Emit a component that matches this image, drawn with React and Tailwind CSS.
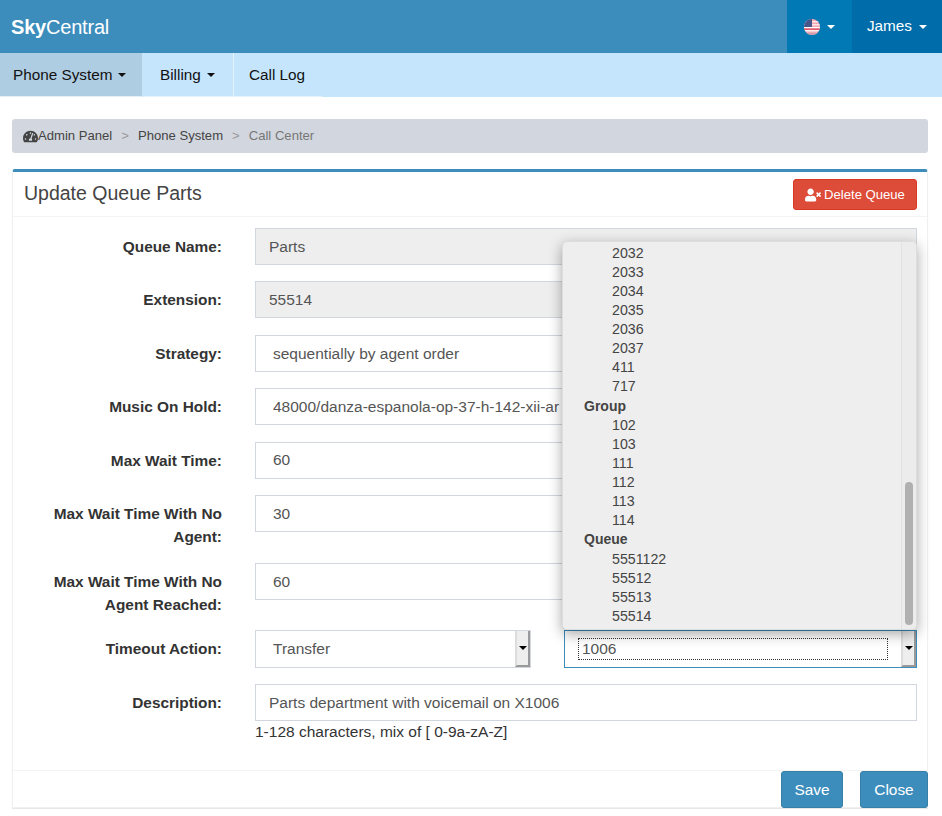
import { FaTachometerAlt, FaUserTimes } from 'react-icons/fa';

const peers = ['2032', '2033', '2034', '2035', '2036', '2037', '411', '717'];
const groups = ['102', '103', '111', '112', '113', '114'];
const queues = ['5551122', '55512', '55513', '55514'];

function Caret({ className = '' }) {
    return <span className={`inline-block w-0 h-0 border-x-[4px] border-x-transparent border-t-[4px] ${className}`}></span>;
}

function Field({ children, muted }) {
    return (
        <div className={`h-[37px] flex-1 min-w-0 border border-[#d2d6de] px-[13px] flex items-center whitespace-nowrap overflow-hidden text-[15.5px] text-[#555] ${muted ? 'bg-[#eee]' : 'bg-white'}`}>
            {children}
        </div>
    );
}

function SelectField({ children }) {
    return (
        <div className="h-[37px] flex-1 min-w-0 border border-[#d2d6de] pl-[17px] flex items-center whitespace-nowrap overflow-hidden text-[15.5px] text-[#555] bg-white">
            {children}
        </div>
    );
}

function Row({ label, children, className = 'h-[37.4px] mb-4' }) {
    return (
        <div className={`flex ${className}`}>
            <label className="w-[209px] shrink-0 pl-[29px] pt-[7px] text-right text-[15.4px] leading-[23px] font-bold text-[#333]">{label}</label>
            <div className="ml-[33px] flex-1 min-w-0">{children}</div>
        </div>
    );
}

function SelectArrow() {
    return (
        <div className="w-[15px] shrink-0 self-stretch flex items-center justify-center bg-[#eee] border-l-2 border-l-[#ddd] border-r-2 border-r-[#999] border-b-2 border-b-[#999]">
            <Caret className="border-t-black" />
        </div>
    );
}

function DropdownGroup({ title, items }) {
    return (
        <>
            {title && <div className="h-[19.13px] pl-[21px] leading-[19px] font-bold text-[#444]">{title}</div>}
            {items.map((item) => (
                <div key={item} className="h-[19.13px] pl-[49px] leading-[19px] text-[14.2px] text-[#444]">{item}</div>
            ))}
        </>
    );
}

function UsFlag() {
    return (
        <svg width="16" height="16" viewBox="0 0 16 16">
            <defs>
                <clipPath id="flagclip"><circle cx="8" cy="8" r="8" /></clipPath>
            </defs>
            <g clipPath="url(#flagclip)">
                <rect width="16" height="16" fill="#f3a9b3" />
                <rect y="2" width="16" height="1.5" fill="#fff" opacity="0.7" />
                <rect y="5" width="16" height="1.5" fill="#fff" opacity="0.7" />
                <rect y="8" width="16" height="1.5" fill="#fff" />
                <rect y="9.5" width="16" height="1.2" fill="#d9364f" />
                <rect y="11" width="16" height="1.5" fill="#fff" opacity="0.8" />
                <rect y="14" width="16" height="2" fill="#c9a0ad" />
                <rect width="8" height="8" fill="#46558a" />
            </g>
        </svg>
    );
}

export default function App() {
    return (
        <div className="min-h-[816px] bg-white overflow-hidden font-['Liberation_Sans',Arial,sans-serif] text-[14px]">
            {/* Top bar */}
            <header className="h-[53px] bg-[#3c8dbc] flex items-stretch text-white">
                <div className="flex items-center pl-[11px] text-[20px] tracking-[-0.2px]">
                    <b>Sky</b>Central
                </div>
                <div className="ml-auto flex items-stretch">
                    <div className="w-[65px] bg-[#0079b5] flex items-center justify-center gap-[7px]">
                        <UsFlag />
                        <Caret className="border-t-white" />
                    </div>
                    <div className="w-[90px] bg-[#006ca9] flex items-center justify-center gap-[7px] text-[15.3px]">
                        James
                        <Caret className="border-t-white" />
                    </div>
                </div>
            </header>

            {/* Module nav */}
            <nav className="h-[44px] bg-[#c5e5fd] flex text-[15.3px] text-[#111]">
                <div className="w-[142px] h-full pt-px bg-[#afcde2] border-b border-[#e5f0f8] flex items-center gap-[6px] pl-[13px]">
                    Phone System
                    <Caret className="border-t-[#111]" />
                </div>
                <div className="w-[90px] h-full pt-px ml-px border-b border-[#e5f3fe] flex items-center gap-[6px] pl-[17px]">
                    Billing
                    <Caret className="border-t-[#111]" />
                </div>
                <div className="w-[89px] h-full pt-px border-l border-b border-[#e5f3fe] flex items-center pl-[15px]">Call Log</div>
            </nav>

            <main className="pl-[12px] pr-[14px] pt-[22px]">
                {/* Breadcrumb */}
                <div className="h-[34px] rounded-[3px] bg-[#d2d6de] flex items-center pl-[11px] text-[13.1px] text-[#444]">
                    <FaTachometerAlt className="text-[15px] text-[#444]" />
                    <span>Admin Panel</span>
                    <span className="mx-[9px] text-[#999]">&gt;</span>
                    <span>Phone System</span>
                    <span className="mx-[9px] text-[#999]">&gt;</span>
                    <span className="text-[#777]">Call Center</span>
                </div>

                {/* Queue form */}
                <section className="relative mt-[16px] h-[639px] border-x border-b border-[#f0f0f0] border-t-[3px] border-t-[#3c8dbc] rounded-t-[3px] shadow-[0_1px_1px_rgba(0,0,0,0.1)]">
                    <div className="h-[45px] border-b border-[#f4f4f4] flex items-center justify-between pl-[11px] pr-[10px]">
                        <h1 className="text-[19.5px] text-[#444]">Update Queue Parts</h1>
                        <button className="h-[31px] w-[124px] pt-px rounded-[3px] bg-[#dd4b39] border border-[#d73925] text-white text-[13.1px] flex items-center justify-center gap-[3px]">
                            <FaUserTimes className="text-[16px]" />
                            Delete Queue
                        </button>
                    </div>

                    <div className="pt-[11px] pr-[10px]">
                        <Row label="Queue Name:"><Field muted>Parts</Field></Row>
                        <Row label="Extension:"><Field muted>55514</Field></Row>
                        <Row label="Strategy:"><SelectField>sequentially by agent order</SelectField></Row>
                        <Row label="Music On Hold:"><SelectField>48000/danza-espanola-op-37-h-142-xii-ar</SelectField></Row>
                        <Row label="Max Wait Time:"><SelectField>60</SelectField></Row>
                        <Row label="Max Wait Time With No Agent:" className="h-[52px] mb-4"><SelectField>30</SelectField></Row>
                        <Row label="Max Wait Time With No Agent Reached:" className="h-[51px] mb-4"><SelectField>60</SelectField></Row>
                        <Row label="Timeout Action:" className="h-[38px] mb-4">
                            <div className="flex gap-[33px] h-[38px]">
                                <div className="w-[276px] flex border border-[#d2d6de] text-[15.5px] text-[#555]">
                                    <div className="flex-1 pl-[17px] flex items-center">Transfer</div>
                                    <SelectArrow />
                                </div>
                                <div className="flex-1 flex border border-[#3c8dbc] text-[15.5px] text-[#555]">
                                    <div className="flex-1 flex items-center pl-[13px] pr-[13px]">
                                        <div className="w-full h-[22px] border border-dotted border-[#333] flex items-center pl-[3px]">1006</div>
                                    </div>
                                    <SelectArrow />
                                </div>
                            </div>
                        </Row>
                        <Row label="Description:" className="mb-0">
                            <Field>Parts department with voicemail on X1006</Field>
                            <p className="mt-[1px] text-[15.5px] leading-[20px] text-[#333]">1-128 characters, mix of [ 0-9a-zA-Z]</p>
                        </Row>
                    </div>

                    {/* Open select list */}
                    <div className="absolute left-[549px] top-[69px] w-[355px] h-[389px] overflow-hidden rounded-[5px] bg-[#eee] border border-[#ddd] shadow-[0_4px_14px_rgba(0,0,0,0.35)]">
                        <div className="pt-[1.5px]">
                            <DropdownGroup items={peers} />
                            <DropdownGroup title="Group" items={groups} />
                            <DropdownGroup title="Queue" items={queues} />
                        </div>
                        <div className="absolute right-0 top-0 bottom-0 w-[15px] bg-[#ececec] border-l border-[#e2e2e2]">
                            <div className="absolute left-[3px] top-[240px] w-[8px] h-[143px] rounded-full bg-[#b0b0b0]"></div>
                        </div>
                    </div>

                    <div className="absolute left-0 right-[-1px] bottom-[-1px] h-[38px] border-t border-[#f4f4f4] flex justify-end gap-[17px]">
                        <button className="w-[62px] h-[37px] rounded-[3px] bg-[#3c8dbc] border border-[#367fa9] text-white text-[15.4px]">Save</button>
                        <button className="w-[68px] h-[37px] rounded-[3px] bg-[#3c8dbc] border border-[#367fa9] text-white text-[15.4px]">Close</button>
                    </div>
                </section>
            </main>
        </div>
    );
}
